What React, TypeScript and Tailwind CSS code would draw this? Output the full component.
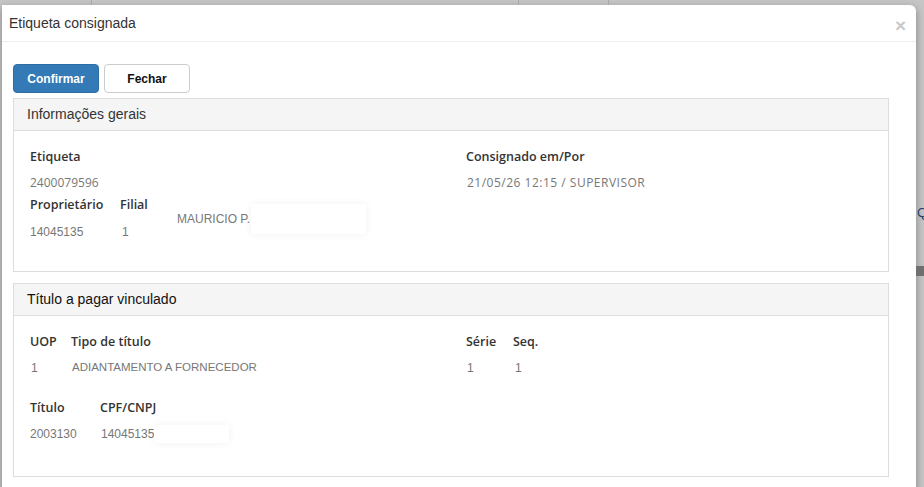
export default function App() {
  return (
    <div className="relative h-[487px] w-[924px] overflow-hidden bg-[#c6c6c6] font-['Liberation_Sans',Arial,sans-serif]">
      {/* page behind the backdrop */}
      <div className="flex h-[5px] w-full">
        <div className="w-[92px] border-r border-[#a8a8a8]" />
        <div className="w-[427px] border-r border-[#a8a8a8]" />
        <div className="w-[90px] border-r border-[#a8a8a8]" />
      </div>

      <div className="absolute right-0 top-0 flex h-full w-[8px] flex-col overflow-hidden">
        <div className="h-[205px]" />
        <div className="h-[16px] w-[14px] pl-[1px] text-[13px] leading-[16px] text-[#1e3f6a]">Q</div>
        <div className="h-[45px]" />
        <div className="h-[10px] bg-[#6f6f6f]" />
      </div>

      {/* modal */}
      <div className="ml-[2px] w-[914px] rounded-tr-[6px] bg-white shadow-[0_3px_9px_rgba(0,0,0,0.35)]">
        <div className="flex h-[37px] items-center justify-between border-b border-[#eeeeee] pl-[7px] pr-[10px]">
          <h4 className="text-[14px] text-[#333333]">Etiqueta consignada</h4>
          <span className="mt-[4px] text-[19px] font-bold leading-none text-[#c9c9c9]">×</span>
        </div>

        <div className="pb-[20px] pl-[11px] pr-[27px] pt-[22px]">
          <div className="flex gap-[5px]">
            <button className="h-[29px] w-[86px] rounded-[4px] border border-[#2e6da4] bg-[#337ab7] text-[12px] font-bold text-white">
              Confirmar
            </button>
            <button className="h-[29px] w-[86px] rounded-[4px] border border-[#cccccc] bg-white text-[12px] font-bold text-[#111111]">
              Fechar
            </button>
          </div>

          {/* Informações gerais */}
          <div className="mt-[5px] border border-[#dddddd]">
            <div className="flex h-[32px] items-center border-b border-[#dddddd] bg-[#f5f5f5] px-[13px] text-[14px] text-[#333333]">
              Informações gerais
            </div>
            <div className="grid grid-cols-[436px_1fr] pb-[29px] pl-[16px] pt-[16px] font-['Open_Sans',sans-serif] text-[12px]">
              <div>
                <div className="h-[20px] text-[12.5px] font-semibold leading-[20px] text-[#333333]">Etiqueta</div>
                <div className="mt-[6px] h-[20px] leading-[20px] text-[#777777]">2400079596</div>
                <div className="mt-[2px] flex">
                  <div className="w-[90px]">
                    <div className="h-[20px] text-[12.5px] font-semibold leading-[20px] text-[#333333]">Proprietário</div>
                    <div className="mt-[7px] h-[20px] font-['Liberation_Sans',Arial,sans-serif] leading-[20px] text-[#777777]">
                      14045135
                    </div>
                  </div>
                  <div className="w-[57px]">
                    <div className="h-[20px] text-[12.5px] font-semibold leading-[20px] text-[#333333]">Filial</div>
                    <div className="mt-[7px] h-[20px] pl-[2px] font-['Liberation_Sans',Arial,sans-serif] leading-[20px] text-[#777777]">
                      1
                    </div>
                  </div>
                  <div className="flex items-center">
                    <span className="font-['Liberation_Sans',Arial,sans-serif] text-[#777777]">MAURICIO P.</span>
                    <div className="ml-[1px] h-[30px] w-[115px] bg-white shadow-[0_0_8px_rgba(0,0,0,0.06)]" />
                  </div>
                </div>
              </div>
              <div>
                <div className="h-[20px] text-[12.5px] font-semibold leading-[20px] text-[#333333]">Consignado em/Por</div>
                <div className="mt-[6px] h-[20px] pl-[1px] leading-[20px] tracking-[0.5px] text-[#777777]">
                  21/05/26 12:15 / SUPERVISOR
                </div>
              </div>
            </div>
          </div>

          {/* Título a pagar vinculado */}
          <div className="mt-[11px] border border-[#dddddd]">
            <div className="flex h-[32px] items-center border-b border-[#dddddd] bg-[#f5f5f5] px-[13px] text-[14px] text-[#111111]">
              Título a pagar vinculado
            </div>
            <div className="pb-[32px] pl-[16px] pt-[16px] font-['Open_Sans',sans-serif] text-[12px]">
              <div className="grid grid-cols-[436px_1fr]">
                <div className="flex">
                  <div className="w-[41px]">
                    <div className="h-[20px] text-[12.5px] font-semibold leading-[20px] text-[#333333]">UOP</div>
                    <div className="mt-[6px] h-[20px] pl-[1px] font-['Liberation_Sans',Arial,sans-serif] leading-[20px] text-[#777777]">
                      1
                    </div>
                  </div>
                  <div>
                    <div className="h-[20px] text-[12.5px] font-semibold leading-[20px] text-[#333333]">Tipo de título</div>
                    <div className="mt-[6px] h-[20px] pl-[1px] font-['Liberation_Sans',Arial,sans-serif] text-[11.5px] leading-[18px] text-[#777777]">
                      ADIANTAMENTO A FORNECEDOR
                    </div>
                  </div>
                </div>
                <div className="flex">
                  <div className="w-[47px]">
                    <div className="h-[20px] text-[12.5px] font-semibold leading-[20px] text-[#333333]">Série</div>
                    <div className="mt-[6px] h-[20px] pl-[1px] font-['Liberation_Sans',Arial,sans-serif] leading-[20px] text-[#777777]">1</div>
                  </div>
                  <div>
                    <div className="h-[20px] text-[12.5px] font-semibold leading-[20px] text-[#333333]">Seq.</div>
                    <div className="mt-[6px] h-[20px] pl-[2px] font-['Liberation_Sans',Arial,sans-serif] leading-[20px] text-[#777777]">1</div>
                  </div>
                </div>
              </div>

              <div className="mt-[20px] flex">
                <div className="w-[70px]">
                  <div className="h-[20px] text-[12.5px] font-semibold leading-[20px] text-[#333333]">Título</div>
                  <div className="mt-[6px] h-[20px] font-['Liberation_Sans',Arial,sans-serif] leading-[20px] text-[#777777]">
                    2003130
                  </div>
                </div>
                <div>
                  <div className="h-[20px] text-[12.5px] font-semibold leading-[20px] text-[#333333]">CPF/CNPJ</div>
                  <div className="mt-[6px] flex h-[20px] items-center pl-[1px] font-['Liberation_Sans',Arial,sans-serif] text-[#777777]">
                    <span>14045135</span>
                    <div className="h-[18px] w-[75px] bg-white shadow-[0_0_8px_rgba(0,0,0,0.06)]" />
                  </div>
                </div>
              </div>
            </div>
          </div>
        </div>
      </div>
    </div>
  );
}
